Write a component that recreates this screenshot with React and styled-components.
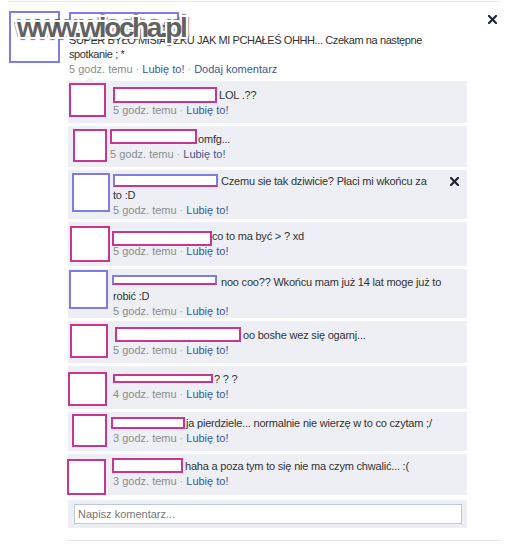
import React from 'react';
import styled, { createGlobalStyle } from 'styled-components';

const pink = '#c9358f';
const purple = '#7f7ce6';
const listBg = '#edeff4';
const link = '#3b5998';
const gray = '#8c8c8c';

const GlobalStyle = createGlobalStyle`
  body {
    margin: 0;
    background: #fff;
    font-family: "Liberation Sans", Tahoma, Arial, sans-serif;
    font-size: 11px;
    color: #333;
  }
`;

const Page = styled.div`
  width: 506px;
  padding-top: 1px;
`;

const Rule = styled.div`
  height: 1px;
  background: #e9e9e9;
  margin: ${(p) => p.$margin};
`;

const Story = styled.div`
  position: relative;
  display: flex;
  padding: 0 4px 0 8px;
`;

const AvatarSlot = styled.div`
  width: ${(p) => p.$w}px;
  flex-shrink: 0;
`;

const Avatar = styled.div`
  box-sizing: border-box;
  width: ${(p) => p.$w}px;
  height: ${(p) => p.$h}px;
  margin-left: ${(p) => p.$x}px;
  margin-top: ${(p) => p.$y}px;
  border: 2px solid ${(p) => p.$color};
  background: #fff;
`;

const Body = styled.div`
  flex: 1;
  min-width: 0;
`;

const MainName = styled.div`
  box-sizing: border-box;
  width: 110px;
  height: 15px;
  margin-top: 10px;
  border: 2px solid ${purple};
  border-bottom-color: ${pink};
`;

const Message = styled.div`
  margin-top: 6px;
  line-height: 14px;
  letter-spacing: -0.4px;
  color: #333;
`;

const Meta = styled.div`
  margin-top: 1px;
  line-height: 14px;
  color: ${gray};
  white-space: nowrap;
`;

const Link = styled.span`
  color: ${link};
`;

const Dot = styled.span`
  color: #b0b0b0;
  margin: 0 3px;
`;

const Watermark = styled.div`
  position: absolute;
  left: 17px;
  top: 12px;
  font-family: "Liberation Sans", Arial, sans-serif;
  font-weight: 700;
  font-size: 28px;
  line-height: 28px;
  letter-spacing: -2.4px;
  color: rgba(70, 70, 70, 0.85);
  text-shadow:
    2px 0 0 #fff, -2px 0 0 #fff, 0 2px 0 #fff, 0 -2px 0 #fff,
    2px 2px 0 #fff, -2px 2px 0 #fff, 2px -2px 0 #fff, -2px -2px 0 #fff,
    3px 0 1px rgba(70, 70, 70, 0.7), -3px 0 1px rgba(70, 70, 70, 0.7),
    0 3px 1px rgba(70, 70, 70, 0.7), 0 -3px 1px rgba(70, 70, 70, 0.7);
  pointer-events: none;
  white-space: nowrap;
`;

const Close = styled.div`
  position: absolute;
  right: ${(p) => p.$right}px;
  top: ${(p) => p.$top}px;
  width: 9px;
  height: 9px;
  display: flex;
`;

const List = styled.div`
  position: relative;
  width: 399px;
  margin: 5px 0 0 -1px;
  &::before {
    content: '';
    position: absolute;
    left: 18px;
    top: -4px;
    border: 4px solid transparent;
    border-top: 0;
    border-bottom-color: ${listBg};
  }
`;

const Row = styled.div`
  position: relative;
  display: flex;
  align-items: flex-start;
  background: ${listBg};
  & + & {
    margin-top: 3px;
  }
`;

const Content = styled.div`
  flex: 1;
  min-width: 0;
  padding: ${(p) => p.$pt}px 0 ${(p) => p.$pb}px;
  margin-left: ${(p) => p.$shift || 0}px;
  line-height: 14px;
`;

const NameBox = styled.span`
  display: inline-block;
  box-sizing: border-box;
  vertical-align: top;
  width: ${(p) => p.$w}px;
  height: ${(p) => p.$h}px;
  margin: ${(p) => p.$top}px ${(p) => p.$mr}px ${(p) => 14 - p.$h - p.$top}px
    ${(p) => p.$dx}px;
  border: 2px solid ${(p) => p.$color};
  border-bottom-color: ${(p) => p.$bottom || p.$color};
  background: #fff;
`;

const Text = styled.span`
  color: #333;
  letter-spacing: -0.2px;
`;

const InputRow = styled.div`
  background: ${listBg};
  margin-top: 5px;
  padding: 4px 0 4px 6px;
`;

const Input = styled.div`
  box-sizing: border-box;
  width: 388px;
  height: 20px;
  border: 1px solid #bdc7d8;
  background: #fff;
  padding-left: 3px;
  line-height: 18px;
  color: #777;
`;

const CloseIcon = () => (
  <svg width="9" height="9" viewBox="0 0 9 9">
    <path d="M1 1L8 8M8 1L1 8" stroke="#1f2533" strokeWidth="2.2" strokeLinecap="square" />
  </svg>
);

const comments = [
  {
    pt: 7, pb: 6,
    avatar: { x: 1, y: 2, w: 37, h: 34, color: pink },
    name: { dx: 0, w: 104, top: -1, h: 16, mr: 2, color: pink },
    lines: ['LOL .??'],
    time: '5 godz. temu',
  },
  {
    pt: 6, pb: 6, shift: -3,
    avatar: { x: 5, y: 3, w: 34, h: 33, color: pink },
    name: { dx: 0, w: 87, top: -3, h: 15, mr: 1, color: pink },
    lines: ['omfg...'],
    time: '5 godz. temu',
  },
  {
    pt: 4, pb: 2, close: true,
    avatar: { x: 4, y: 3, w: 38, h: 39, color: purple },
    name: { dx: 0, w: 105, top: 0, h: 13, mr: 3, color: purple, bottom: pink },
    lines: ['Czemu sie tak dziwicie? Płaci mi wkońcu za', 'to :D'],
    time: '5 godz. temu',
  },
  {
    pt: 7, pb: 8,
    avatar: { x: 2, y: 4, w: 40, h: 36, color: pink },
    name: { dx: -1, w: 100, top: 2, h: 15, mr: 0, color: pink },
    lines: ['co to ma być > ? xd'],
    time: '5 godz. temu',
  },
  {
    pt: 6, pb: 0,
    avatar: { x: 1, y: 1, w: 39, h: 39, color: purple },
    name: { dx: -1, w: 105, top: 0, h: 10, mr: 4, color: purple, bottom: pink },
    lines: ['noo coo?? Wkońcu mam już 14 lat moge już to', 'robić :D'],
    time: '5 godz. temu',
  },
  {
    pt: 7, pb: 6,
    avatar: { x: 2, y: 3, w: 38, h: 34, color: pink },
    name: { dx: 2, w: 126, top: -1, h: 15, mr: 2, color: pink },
    lines: ['oo boshe wez się ogarnj...'],
    time: '5 godz. temu',
  },
  {
    pt: 6, pb: 8,
    avatar: { x: 0, y: 6, w: 39, h: 34, color: pink },
    name: { dx: 0, w: 100, top: 2, h: 9, mr: 1, color: pink },
    lines: ['? ? ?'],
    time: '4 godz. temu',
  },
  {
    pt: 4, pb: 6,
    avatar: { x: 4, y: 2, w: 35, h: 33, color: pink },
    name: { dx: -2, w: 74, top: 1, h: 12, mr: 1, color: pink },
    lines: ['ja pierdziele... normalnie nie wierzę w to co czytam ;/'],
    time: '3 godz. temu',
  },
  {
    pt: 5, pb: 7,
    avatar: { x: -1, y: 5, w: 39, h: 36, color: pink },
    name: { dx: -1, w: 71, top: -1, h: 15, mr: 2, color: pink },
    lines: ['haha a poza tym to się nie ma czym chwalić... :('],
    time: '3 godz. temu',
  },
];

function Comment({ c }) {
  const { avatar, name } = c;
  return (
    <Row>
      <AvatarSlot $w={45}>
        <Avatar $x={avatar.x} $y={avatar.y} $w={avatar.w} $h={avatar.h} $color={avatar.color} />
      </AvatarSlot>
      <Content $pt={c.pt} $pb={c.pb} $shift={c.shift}>
        <div>
          <NameBox
            $dx={name.dx}
            $w={name.w}
            $top={name.top}
            $h={name.h}
            $mr={name.mr}
            $color={name.color}
            $bottom={name.bottom}
          />
          <Text>
            {c.lines.map((l, i) => (
              <React.Fragment key={i}>
                {i > 0 && <br />}
                {l}
              </React.Fragment>
            ))}
          </Text>
        </div>
        <Meta>
          {c.time}
          <Dot>·</Dot>
          <Link>Lubię to!</Link>
        </Meta>
      </Content>
      {c.close && (
        <Close $right={8} $top={7}>
          <CloseIcon />
        </Close>
      )}
    </Row>
  );
}

export default function App() {
  return (
    <Page>
      <GlobalStyle />
      <Rule $margin="0 6px 0 8px" />
      <Story>
        <AvatarSlot $w={61}>
          <Avatar $x={1} $y={9} $w={51} $h={52} $color={purple} />
        </AvatarSlot>
        <Body>
          <MainName />
          <Message>
            SUPER BYŁO MISIACZKU JAK MI PCHAŁEŚ OHHH... Czekam na następne
            <br />
            spotkanie ; *
          </Message>
          <Meta>
            5 godz. temu
            <Dot>·</Dot>
            <Link>Lubię to!</Link>
            <Dot>·</Dot>
            <Link>Dodaj komentarz</Link>
          </Meta>
          <List>
            {comments.map((c, i) => (
              <Comment key={i} c={c} />
            ))}
            <InputRow>
              <Input>Napisz komentarz...</Input>
            </InputRow>
          </List>
          <Rule $margin="12px 0 0 -3px" />
        </Body>
        <Watermark>www.wiocha.pl</Watermark>
        <Close $right={9} $top={13}>
          <CloseIcon />
        </Close>
      </Story>
    </Page>
  );
}
